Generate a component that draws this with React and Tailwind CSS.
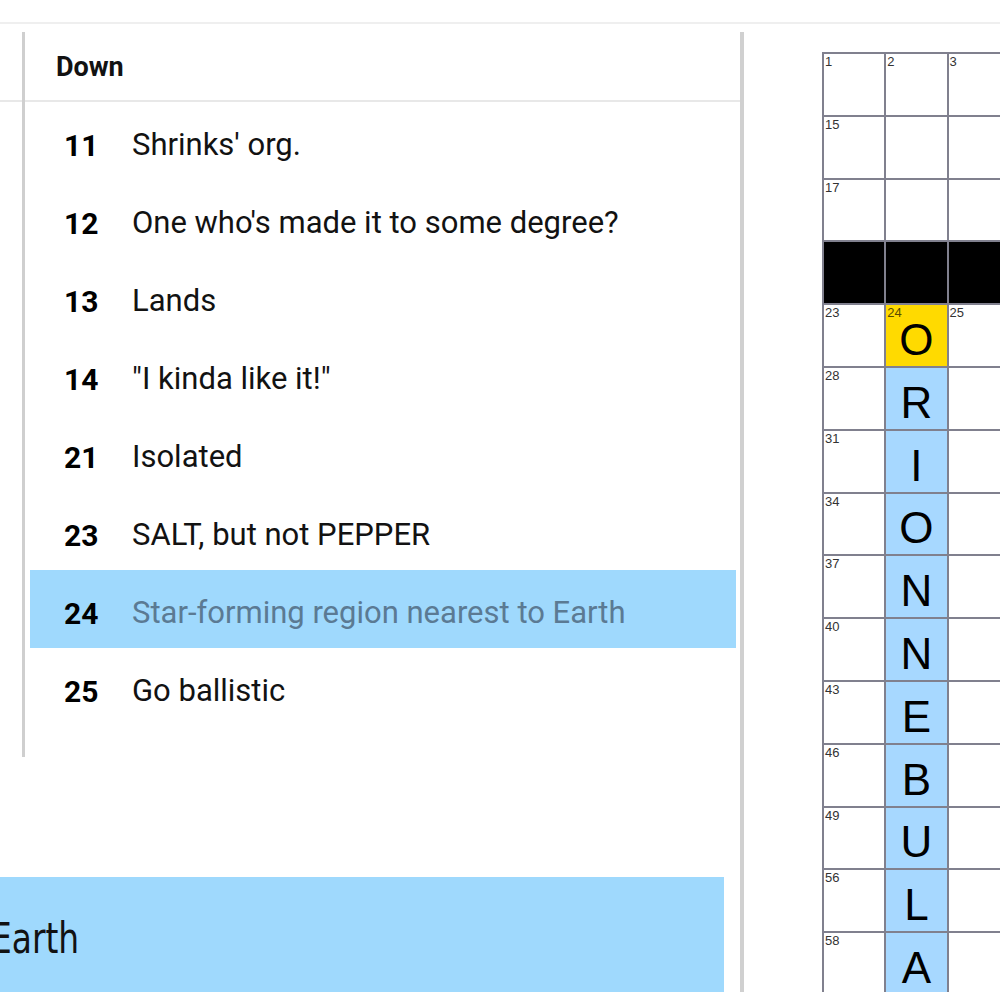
import React from 'react';

const clues = [
  { num: 11, text: "Shrinks' org." },
  { num: 12, text: "One who's made it to some degree?" },
  { num: 13, text: 'Lands' },
  { num: 14, text: '"I kinda like it!"' },
  { num: 21, text: 'Isolated' },
  { num: 23, text: 'SALT, but not PEPPER' },
  { num: 24, text: 'Star-forming region nearest to Earth', active: true },
  { num: 25, text: 'Go ballistic' },
];

// 15 rows x 3 visible columns: [number, letter, kind]
const rows = [
  [[1], [2], [3]],
  [[15], [], []],
  [[17], [], []],
  [[null, null, 'black'], [null, null, 'black'], [null, null, 'black']],
  [[23], [24, 'O', 'selected'], [25]],
  [[28], [null, 'R', 'word'], []],
  [[31], [null, 'I', 'word'], []],
  [[34], [null, 'O', 'word'], []],
  [[37], [null, 'N', 'word'], []],
  [[40], [null, 'N', 'word'], []],
  [[43], [null, 'E', 'word'], []],
  [[46], [null, 'B', 'word'], []],
  [[49], [null, 'U', 'word'], []],
  [[56], [null, 'L', 'word'], []],
  [[58], [null, 'A', 'word'], []],
];

const Cell = ({ num, letter, kind }) => {
  let bg = 'bg-white';
  if (kind === 'black') bg = 'bg-black';
  if (kind === 'selected') bg = 'bg-[#ffda00]';
  if (kind === 'word') bg = 'bg-[#a7d8ff]';
  return (
    <div
      className={`relative shrink-0 w-[62.3px] h-[62.8px] border-r-2 border-b-2 border-[#80808e] flex items-end justify-center ${bg}`}
    >
      {num && (
        <span
          className={`absolute left-[1px] top-[1px] text-[13px] leading-none ${
            kind === 'selected' ? 'text-[#5a4a00]' : 'text-[#333]'
          }`}
        >
          {num}
        </span>
      )}
      {letter && <span className="text-[44px] leading-none pb-[4px] text-black">{letter}</span>}
    </div>
  );
};

const App = () => {
  return (
    <div className="w-[1000px] h-[992px] overflow-hidden bg-white font-['Roboto',sans-serif]">
      <div className="h-[24px] border-b-2 border-[#efefef]" />

      <div className="flex pt-[8px] h-[968px]">
        {/* clue lists */}
        <div className="w-[740px] shrink-0 flex flex-col">
          <div className="flex">
            <div className="w-[22px] shrink-0">
              <div className="h-[70px] border-b-2 border-[#e8e8e8]" />
            </div>
            <div className="w-[718px] shrink-0 h-[725px] border-l-[3px] border-[#cfcfcf]">
              <div className="h-[70px] border-b-2 border-[#e8e8e8] pl-[31px] flex items-center">
                <h3 className="text-[27px] font-bold text-[#121212] pt-[3px]">Down</h3>
              </div>
              <ul>
                {clues.map((c) => (
                  <li
                    key={c.num}
                    className={`h-[78px] ml-[5px] mr-[4px] pl-[34px] pt-[8px] flex items-center ${
                      c.active ? 'bg-[#9fd9fd]' : ''
                    }`}
                  >
                    <span className="w-[68px] shrink-0 text-[30px] font-bold text-black">{c.num}</span>
                    <span
                      className={`text-[31px] whitespace-nowrap ${
                        c.active ? 'text-[#5b7a93]' : 'text-[#121212]'
                      }`}
                    >
                      {c.text}
                    </span>
                  </li>
                ))}
              </ul>
            </div>
          </div>

          <div className="mt-[120px] w-[724px] h-[115px] bg-[#9fd9fd] flex items-center overflow-hidden">
            <span className="-ml-[9px] pt-[8px] text-[42px] whitespace-nowrap text-[#121212] font-['Liberation_Sans_Narrow','DejaVu_Sans_Condensed',sans-serif] scale-x-[0.87] origin-left">
              Earth
            </span>
          </div>
        </div>

        <div className="w-[4px] shrink-0 bg-[#d0d0d0]" />

        {/* board */}
        <div className="ml-[78px] mt-[20px] shrink-0">
          <div className="border-t-2 border-l-2 border-[#80808e] font-['Liberation_Sans',Arial,sans-serif]">
            {rows.map((r, i) => (
              <div key={i} className="flex">
                {r.map(([num, letter, kind], j) => (
                  <Cell key={j} num={num} letter={letter} kind={kind} />
                ))}
              </div>
            ))}
          </div>
        </div>
      </div>
    </div>
  );
};

export default App;
